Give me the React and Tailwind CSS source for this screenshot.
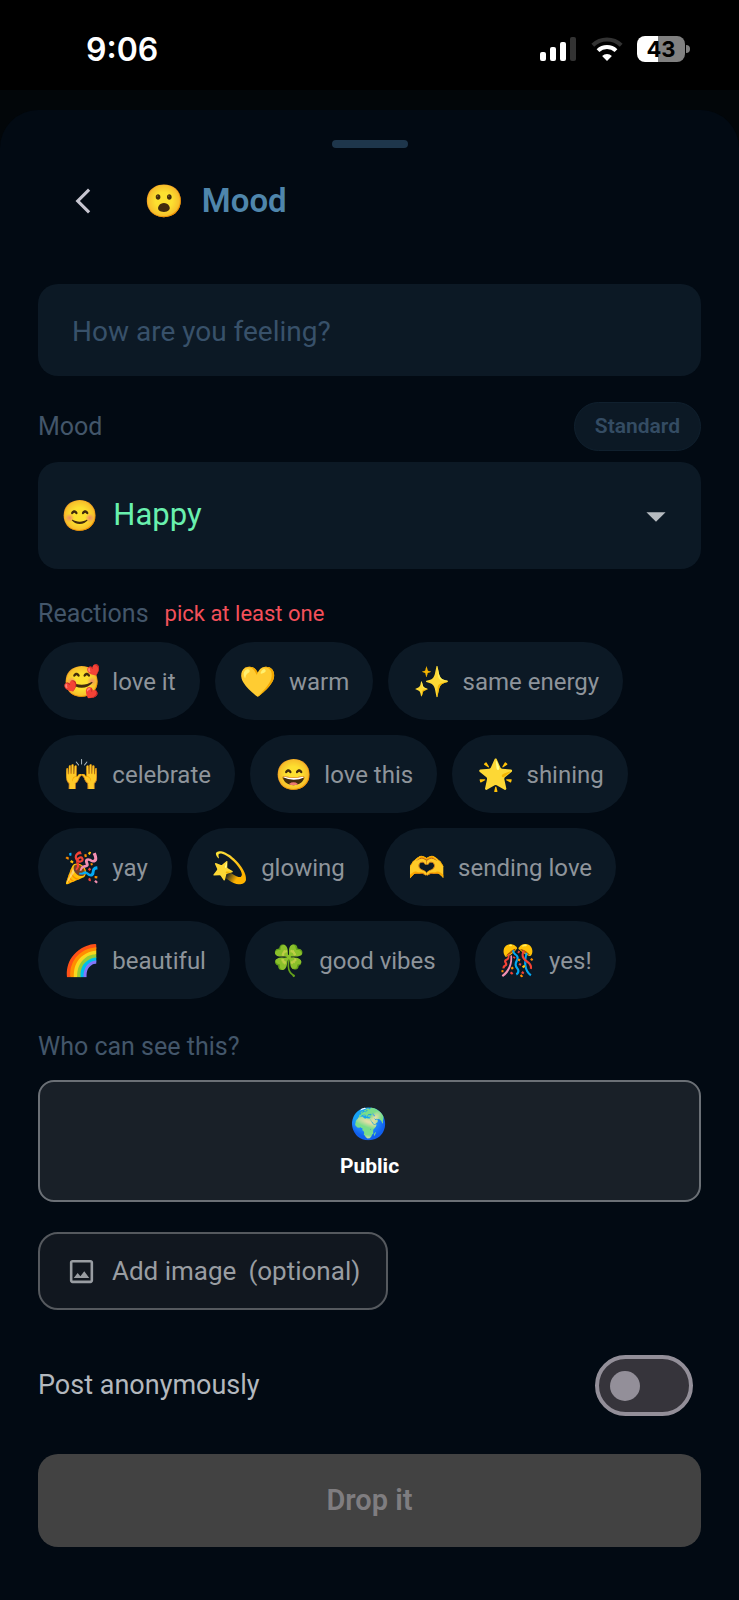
import React, { useState } from "react";
import {
  MdArrowBackIosNew,
  MdArrowDropDown,
  MdOutlineImage,
} from "react-icons/md";

const moods = [
  { value: "happy", label: "Happy", emoji: "😊" },
  { value: "sad", label: "Sad", emoji: "😢" },
  { value: "calm", label: "Calm", emoji: "😌" },
];

const reactions = [
  { emoji: "🥰", label: "love it" },
  { emoji: "💛", label: "warm" },
  { emoji: "✨", label: "same energy" },
  { emoji: "🙌", label: "celebrate" },
  { emoji: "😄", label: "love this" },
  { emoji: "🌟", label: "shining" },
  { emoji: "🎉", label: "yay" },
  { emoji: "💫", label: "glowing" },
  { emoji: "🫶", label: "sending love" },
  { emoji: "🌈", label: "beautiful" },
  { emoji: "🍀", label: "good vibes" },
  { emoji: "🎊", label: "yes!" },
];

const StatusBar = () => {
  return (
    <div className="flex h-[90px] items-center justify-between bg-black pl-[86px] pr-[49px] pt-2 font-['Inter',sans-serif] text-white">
      <span className="pt-px text-[32px] leading-10 font-semibold">9:06</span>
      <div className="flex items-center gap-[14px]">
        <svg width="38" height="26" viewBox="0 0 38 26" fill="currentColor">
          <rect x="1" y="16" width="6" height="9" rx="2" />
          <rect x="11" y="11" width="6" height="14" rx="2" />
          <rect x="21" y="6" width="6" height="19" rx="2" />
          <rect x="31" y="1" width="6" height="24" rx="2" fill="#333333" />
        </svg>
        <svg width="32" height="26" viewBox="0 0 32 26" fill="none" strokeWidth="4">
          <path d="M1.8 9.2a20.5 20.5 0 0 1 28.4 0" stroke="#333333" />
          <path d="M7 14.6a13 13 0 0 1 18 0" stroke="currentColor" />
          <path d="M16 25l-4.900-5a7 7 0 0 1 9.800 0z" fill="currentColor" />
        </svg>
        <div className="flex items-center gap-px">
          <span className="flex h-[26px] w-12 items-center justify-center rounded-lg bg-[linear-gradient(90deg,#ffffff_43%,#808080_43%)] text-[22px] leading-none font-bold text-black">
            43
          </span>
          <span className="h-2 w-1 rounded-r-full bg-[#808080]" />
        </div>
      </div>
    </div>
  );
};

const SectionLabel = ({ children }) => {
  return <h2 className="text-[25px] leading-8 text-[#43566a]">{children}</h2>;
};

const App = () => {
  const [text, setText] = useState("");
  const [mood, setMood] = useState("happy");
  const [selected, setSelected] = useState([]);
  const [anonymous, setAnonymous] = useState(false);

  const currentMood = moods.find((item) => item.value === mood);

  const toggleReaction = (label) => {
    setSelected(
      selected.includes(label)
        ? selected.filter((item) => item !== label)
        : [...selected, label]
    );
  };

  return (
    <div className="min-h-screen bg-[#020609] font-['Roboto','Noto_Color_Emoji',sans-serif]">
      <StatusBar />
      <main className="mt-5 min-h-[1490px] rounded-t-[38px] bg-[#020a13] px-[38px] pt-[30px] pb-[53px]">
        <div className="mx-auto h-2 w-[76px] rounded-full bg-[#1e364b]" />

        <header className="mt-7 flex h-[50px] items-center pl-[30px]">
          <button type="button" aria-label="Back" className="text-[#c6c5d0]">
            <MdArrowBackIosNew size={30} />
          </button>
          <span className="ml-[46px] text-[32px] leading-none">😮</span>
          <h1 className="ml-[18px] text-[33px] leading-10 font-semibold text-[#4f86ac]">
            Mood
          </h1>
        </header>

        <form onSubmit={(e) => e.preventDefault()}>
          <input
            type="text"
            aria-label="How are you feeling?"
            placeholder="How are you feeling?"
            value={text}
            onChange={(e) => setText(e.target.value)}
            className="mt-[58px] h-[92px] w-full rounded-[20px] bg-[#0c1925] px-[34px] pt-[2px] text-[28px] text-white placeholder:text-[#38516a] outline-none"
          />

          <div className="mt-[26px] flex items-center justify-between">
            <SectionLabel>
              <label htmlFor="mood">Mood</label>
            </SectionLabel>
            <button
              type="button"
              className="h-[49px] rounded-full border border-[#10202e] bg-[#0c1925] px-5 text-[21px] font-semibold text-[#344c63]"
            >
              Standard
            </button>
          </div>

          <div className="mt-[11px] flex h-[107px] items-center rounded-[20px] bg-[#0c1925] pr-[22px] pl-[23px]">
            <span className="text-[30px] leading-none">{currentMood.emoji}</span>
            <select
              id="mood"
              value={mood}
              onChange={(e) => setMood(e.target.value)}
              className="ml-[15px] h-full flex-1 appearance-none bg-transparent text-[31px] text-[#69f0ae] outline-none"
            >
              {moods.map((item) => (
                <option key={item.value} value={item.value}>
                  {item.label}
                </option>
              ))}
            </select>
            <MdArrowDropDown size={46} className="pointer-events-none text-[#b6bbc0]" />
          </div>

          <div className="mt-[29px] flex items-center gap-4">
            <SectionLabel>Reactions</SectionLabel>
            <span className="text-[22px] leading-8 text-[#f4505a]">
              pick at least one
            </span>
          </div>

          <div className="mt-3 flex flex-wrap gap-[15px]">
            {reactions.map((item) => (
              <button
                key={item.label}
                type="button"
                aria-pressed={selected.includes(item.label)}
                onClick={() => toggleReaction(item.label)}
                className="flex h-[78px] items-center gap-3 rounded-full bg-[#0c1925] pt-[2px] pr-6 pl-[25px] text-[#8e949b] aria-pressed:bg-[#1a3247]"
              >
                <span className="text-[30px] leading-none">{item.emoji}</span>
                <span className="text-2xl leading-8">{item.label}</span>
              </button>
            ))}
          </div>

          <div className="mt-8">
            <SectionLabel>Who can see this?</SectionLabel>
          </div>
          <button
            type="button"
            className="mt-[17px] flex h-[122px] w-full flex-col items-center justify-center gap-2 rounded-2xl border-2 border-[#6b7076] bg-[#192028] pt-[2px]"
          >
            <span className="text-[30px] leading-10">🌍</span>
            <span className="text-[21px] leading-7 font-bold text-white">Public</span>
          </button>

          <button
            type="button"
            className="mt-[30px] flex h-[78px] items-center rounded-[20px] border-2 border-[#55595e] bg-[#11171f] px-[26px] text-[26px] text-[#999da2]"
          >
            <MdOutlineImage size={31} />
            <span className="ml-[15px]">Add image</span>
            <span className="ml-3">(optional)</span>
          </button>

          <label className="mt-[45px] flex h-[61px] items-center justify-between pr-2 text-[27px] text-[#b3b8be]">
            Post anonymously
            <input
              type="checkbox"
              role="switch"
              checked={anonymous}
              onChange={(e) => setAnonymous(e.target.checked)}
              className="flex h-[61px] w-[98px] appearance-none items-center rounded-full border-4 border-[#938f99] bg-[#36343b] px-[11px] before:size-[30px] before:rounded-full before:bg-[#938f99] checked:justify-end"
            />
          </label>

          <button
            type="submit"
            disabled={selected.length === 0}
            className="mt-[38px] h-[93px] w-full rounded-[20px] bg-[#424242] text-[29px] font-semibold text-[#7f7d80]"
          >
            Drop it
          </button>
        </form>
      </main>
    </div>
  );
};

export default App;
